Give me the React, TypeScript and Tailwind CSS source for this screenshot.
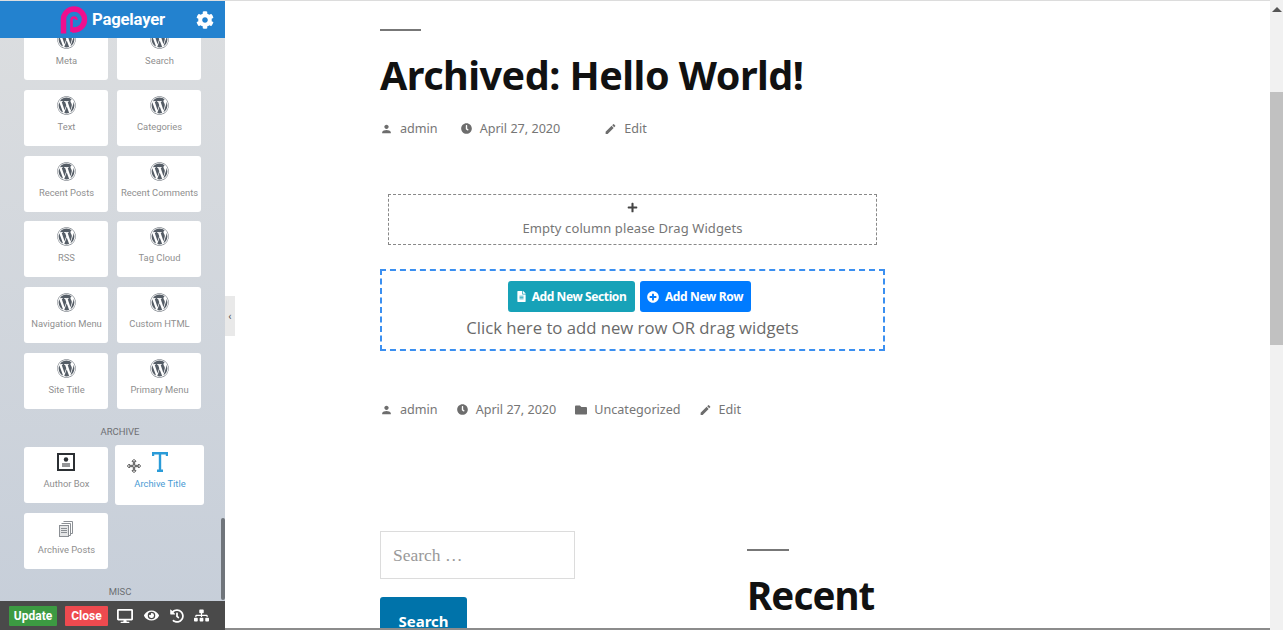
import React from 'react';
import { FaWordpress, FaCog, FaDesktop, FaEye, FaHistory, FaSitemap, FaFolder, FaClock, FaFileAlt, FaPlusCircle, FaPlus } from 'react-icons/fa';
import { MdEdit, MdPerson } from 'react-icons/md';

const rows = [
  ['Meta', 'Search'],
  ['Text', 'Categories'],
  ['Recent Posts', 'Recent Comments'],
  ['RSS', 'Tag Cloud'],
  ['Navigation Menu', 'Custom HTML'],
  ['Site Title', 'Primary Menu'],
];

function Logo() {
  return (
    <svg width="28" height="28" viewBox="0 0 28 28" fill="none">
      <path d="M3.5 27.5 V13.5 A10.5 10.5 0 1 1 14 24 H12" stroke="#ef0f8e" strokeWidth="5.5" />
      <path d="M11.5 26 V14 A2.5 2.5 0 0 1 16.5 14" stroke="#ef0f8e" strokeWidth="2.6" />
    </svg>
  );
}

function WidgetCard({ label }: { label: string }) {
  return (
    <div className="w-[84px] h-[56px] bg-white rounded-[3px] flex flex-col items-center pt-[6px]">
      <FaWordpress className="text-[19px] text-[#555d66]" />
      <span className="mt-[6px] pl-px text-[9.4px] leading-[12px] text-[#8f8f8f] whitespace-nowrap">{label}</span>
    </div>
  );
}

function Sidebar() {
  return (
    <div className="relative w-[225px] h-[630px] shrink-0 flex flex-col bg-gradient-to-b from-[#dcdee0] to-[#c6ced9] font-['Roboto',sans-serif]">
      <div className="h-[37px] mt-px bg-[#2382cf] flex items-center shrink-0 z-10">
        <div className="ml-[60px]"><Logo /></div>
        <span className="ml-[4px] text-[16.7px] font-bold text-white tracking-[-0.2px]">Pagelayer</span>
        <FaCog className="ml-[31px] text-[18px] text-white" />
      </div>
      <div className="flex-1 overflow-hidden relative">
        <div className="-mt-[14px] pl-[24px] flex flex-col">
          {rows.map((row) => (
            <div key={row[0]} className="flex gap-[9px] mb-[9.8px]">
              <WidgetCard label={row[0]} />
              <WidgetCard label={row[1]} />
            </div>
          ))}
          <div className="w-[192px] text-center text-[9.5px] leading-[12px] text-[#6d6f73] mt-[7px] mb-[9px]">ARCHIVE</div>
          <div className="flex items-start">
            <div className="w-[84px] h-[56px] bg-white rounded-[3px] flex flex-col items-center pt-[6px]">
              <svg width="18" height="18" viewBox="0 0 18 18">
                <rect x="1" y="1" width="16" height="16" fill="none" stroke="#2b2f33" strokeWidth="2" />
                <circle cx="9" cy="6.5" r="2.2" fill="#2b2f33" />
                <path d="M5 10.5h8v1H5zM5 12.5h8v1H5z" fill="#2b2f33" />
              </svg>
              <span className="mt-[7px] pl-px text-[9.4px] leading-[12px] text-[#8f8f8f]">Author Box</span>
            </div>
            <div className="relative w-[89px] h-[60px] -mt-[2px] ml-[7px] bg-white rounded-[3px] flex flex-col items-center pt-[7px]">
              <svg width="16" height="20" viewBox="0 0 16 20" className="ml-[1px]">
                <path d="M1 4V1.2H15V4M8 1.5V18.5M5 18.8H11" fill="none" stroke="#2a9bd8" strokeWidth="2.4" />
              </svg>
              <span className="mt-[6px] pl-px text-[9.4px] leading-[12px] text-[#4a9bd4]">Archive Title</span>
              <svg width="16" height="16" viewBox="0 0 24 24" fill="#fff" stroke="#555" strokeWidth="1.5" className="absolute left-[11px] top-[13px]">
                <path d="M12 2l3 3h-2v6h6V9l3 3-3 3v-2h-6v6h2l-3 3-3-3h2v-6H5v2l-3-3 3-3v2h6V5H9z" />
              </svg>
            </div>
          </div>
          <div className="w-[84px] h-[56px] mt-[8px] bg-white rounded-[3px] flex flex-col items-center pt-[8px]">
            <svg width="14" height="16" viewBox="0 0 14 16" fill="none" stroke="#8b8f94" strokeWidth="1">
              <path d="M4.5 .5h9v12h-2M2.5 2.5h9v12h-2" />
              <rect x=".5" y="4.5" width="9" height="11" fill="#e4e5e6" />
              <path d="M2 7.5h6M2 9.5h6M2 11.5h6" />
            </svg>
            <span className="mt-[7px] pl-px text-[9.4px] leading-[12px] text-[#8f8f8f]">Archive Posts</span>
          </div>
          <div className="w-[192px] text-center text-[9.5px] leading-[12px] text-[#6d6f73] mt-[17px]">MISC</div>
        </div>
        <div className="absolute right-0 top-[480px] w-[4px] h-[82px] rounded-sm bg-[#70757b]" />
      </div>
      <div className="h-[29px] bg-[#4a4a4a] flex items-center pl-[9px] shrink-0 z-10">
        <button className="h-[20px] w-[48px] bg-[#3c9a42] rounded-[1px] text-white text-[12px] font-bold">Update</button>
        <button className="h-[20px] w-[43px] ml-[8px] bg-[#ee4a4f] rounded-[1px] text-white text-[12px] font-bold">Close</button>
        <FaDesktop className="ml-[9px] text-[16px] text-white" />
        <FaEye className="ml-[11px] text-[15px] text-white" />
        <FaHistory className="ml-[11px] text-[14px] text-white" />
        <FaSitemap className="ml-[10px] text-[15px] text-white" />
      </div>
      <div className="absolute left-[225px] top-[296px] w-[10px] h-[40px] bg-[#e9e9e9] flex items-center justify-center text-[11px] leading-none text-[#555] z-10">‹</div>
    </div>
  );
}

function Meta({ icon, text, className }: { icon: React.ReactNode; text: string; className?: string }) {
  return (
    <div className={`flex items-center gap-[7px] ${className ?? ''}`}>
      <span className="w-[13px] flex justify-center text-[#6d6d6d]">{icon}</span>
      <span>{text}</span>
    </div>
  );
}

function Main() {
  return (
    <div className="flex-1 h-[630px] overflow-hidden bg-white border-t border-[#dcdcdc] border-b-2 border-b-[#8c8c8c] pl-[155px] font-['Noto_Sans',sans-serif]">
      <div className="w-[41px] h-[2px] bg-[#777] mt-[28px]" />
      <h1 className="mt-[15px] text-[39.5px] leading-[58px] font-bold text-[#111] tracking-[-0.5px] whitespace-nowrap">Archived: Hello World!</h1>
      <div className="mt-[15px] h-[20px] flex items-center text-[12.6px] text-[#767676] whitespace-nowrap">
        <Meta icon={<MdPerson className="text-[14px]" />} text="admin" />
        <Meta icon={<FaClock className="text-[11px]" />} text="April 27, 2020" className="ml-[22px]" />
        <Meta icon={<MdEdit className="text-[14px]" />} text="Edit" className="ml-[44px]" />
      </div>
      <div className="mt-[55px] ml-[8px] w-[489px] h-[51px] border border-dashed border-[#888] flex flex-col items-center pt-[7px]">
        <FaPlus className="text-[11px] text-[#444]" />
        <span className="mt-[5px] text-[13px] leading-[20px] tracking-[0.1px] text-[#767676]">Empty column please Drag Widgets</span>
      </div>
      <div className="mt-[24px] w-[505px] h-[82px] border-2 border-dashed border-[#3b8ff0] flex flex-col items-center pt-[10px]">
        <div className="flex gap-[5px] mr-[7px]">
          <div className="h-[31px] w-[127px] bg-[#17a2b8] rounded-[3px] flex items-center justify-center gap-[5px] text-white text-[12px] font-bold tracking-[-0.4px]">
            <FaFileAlt className="text-[11px]" />Add New Section
          </div>
          <div className="h-[31px] w-[111px] bg-[#007bff] rounded-[3px] flex items-center justify-center gap-[6px] text-white text-[12px] font-bold tracking-[-0.35px]">
            <FaPlusCircle className="text-[12px]" />Add New Row
          </div>
        </div>
        <span className="mt-[4px] text-[16.7px] leading-[24px] text-[#6a6a6a] font-['Open_Sans',sans-serif]">Click here to add new row OR drag widgets</span>
      </div>
      <div className="mt-[49px] h-[20px] flex items-center text-[12.6px] text-[#767676] whitespace-nowrap">
        <Meta icon={<MdPerson className="text-[14px]" />} text="admin" />
        <Meta icon={<FaClock className="text-[11px]" />} text="April 27, 2020" className="ml-[18px]" />
        <Meta icon={<FaFolder className="text-[12px]" />} text="Uncategorized" className="ml-[18px]" />
        <Meta icon={<MdEdit className="text-[14px]" />} text="Edit" className="ml-[18px]" />
      </div>
      <div className="mt-[111px] flex">
        <div className="w-[367px] shrink-0">
          <div className="w-[195px] h-[48px] border border-[#dcdcdc] flex items-center pl-[12px] text-[17.5px] text-[#999] font-['Liberation_Serif',serif]">Search …</div>
          <button className="mt-[18px] w-[87px] h-[50px] bg-[#0073aa] rounded-[3px] text-white text-[15px] font-bold pb-[2px] pt-[1px]">Search</button>
        </div>
        <div className="pt-[18px]">
          <div className="w-[42px] h-[2px] bg-[#777]" />
          <div className="mt-[18px] text-[38.5px] leading-[52px] font-bold text-[#111] tracking-[-0.9px]">Recent</div>
        </div>
      </div>
    </div>
  );
}

function PageScrollbar() {
  return (
    <div className="w-[13px] h-[630px] shrink-0 bg-[#f1f1f1] flex flex-col items-center">
      <div className="mt-[7px] w-0 h-0 border-x-[5px] border-x-transparent border-b-[5px] border-b-[#555]" />
      <div className="mt-[80px] w-full h-[253px] bg-[#c1c1c1]" />
    </div>
  );
}

export default function App() {
  return (
    <div className="flex w-[1283px] h-[630px] overflow-hidden">
      <Sidebar />
      <Main />
      <PageScrollbar />
    </div>
  );
}
